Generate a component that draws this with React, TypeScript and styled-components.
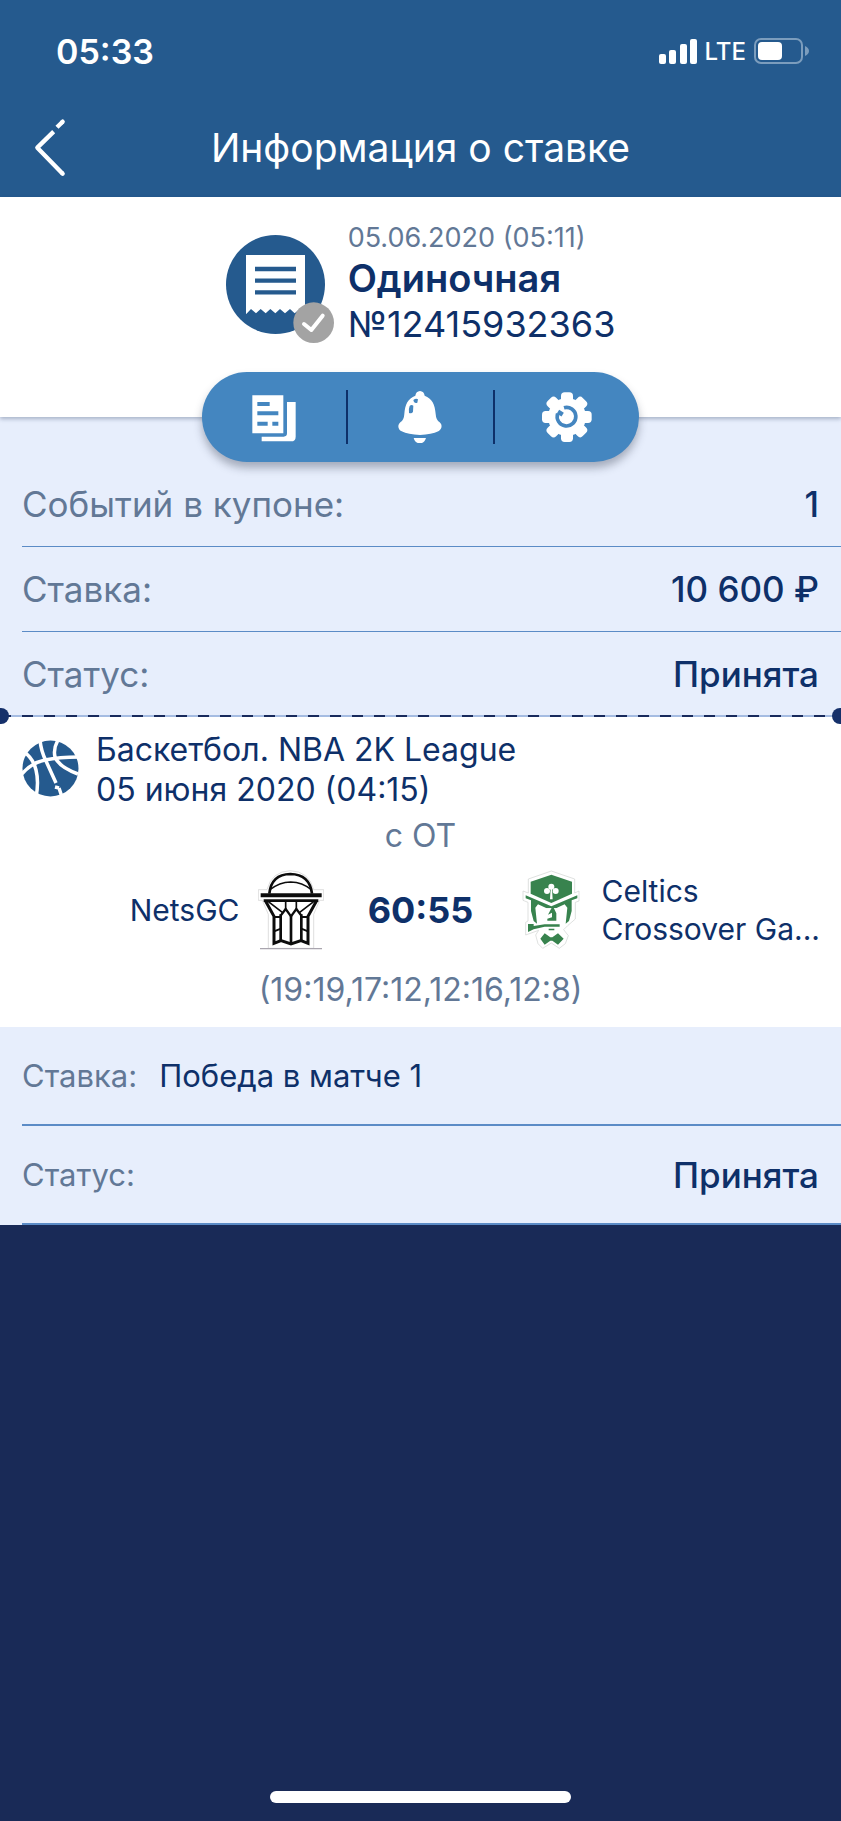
import React from "react";
import styled, { createGlobalStyle } from "styled-components";

const color = {
  header: "#255a8e",
  pill: "#4486c0",
  navy: "#0e3069",
  slate: "#627896",
  pale: "#e7eefc",
  line: "#5b8bc6",
  night: "#192a57",
};

const GlobalStyle = createGlobalStyle`
  * { box-sizing: border-box; }
  body {
    margin: 0;
    background: ${color.night};
    color: ${color.navy};
    font-family: Inter, "Liberation Sans", sans-serif;
    -webkit-font-smoothing: antialiased;
  }
  button { font: inherit; border: 0; padding: 0; background: none; cursor: pointer; }
  h1, h2, p, dl, dt, dd { margin: 0; font-weight: 400; }
  svg { display: block; flex: none; }
`;

const Screen = styled.div`
  display: flex;
  flex-direction: column;
  min-height: 100vh;
`;

const TopBar = styled.header`
  background: ${color.header};
  color: #fff;
`;

const StatusBar = styled.div`
  display: flex;
  justify-content: space-between;
  align-items: center;
  height: 98px;
  padding: 4px 32px 0 56px;
`;

const Clock = styled.time`
  font-size: 34px;
  font-weight: 600;
`;

const Indicators = styled.div`
  display: flex;
  align-items: center;
  gap: 8px;
  font-size: 24px;
  font-weight: 500;
`;

const NavBar = styled.nav`
  display: grid;
  grid-template-columns: 68px 1fr 68px;
  align-items: center;
  height: 99px;
  padding: 0 16px;
`;

const BackButton = styled.button`
  display: flex;
  justify-content: center;
`;

const Title = styled.h1`
  font-size: 39px;
  line-height: 48px;
  text-align: center;
  white-space: nowrap;
`;

const Ticket = styled.section`
  position: relative;
  z-index: 1;
  display: flex;
  justify-content: center;
  gap: 14px;
  padding: 24px 22px 71px;
  background: #fff;
  box-shadow: 0 2px 4px rgba(20, 40, 80, 0.3);
`;

const TicketIcon = styled.div`
  padding-top: 14px;
`;

const TicketDate = styled.p`
  font-size: 27px;
  line-height: 34px;
  color: ${color.slate};
`;

const TicketType = styled.h2`
  font-size: 38px;
  font-weight: 600;
  line-height: 47px;
`;

const TicketNumber = styled.p`
  font-size: 36px;
  line-height: 44px;
`;

const Actions = styled.div`
  position: absolute;
  right: 0;
  bottom: -45px;
  left: 0;
  display: flex;
  align-items: center;
  width: 437px;
  height: 90px;
  margin: 0 auto;
  border-radius: 45px;
  background: ${color.pill};
  box-shadow: 0 6px 8px rgba(40, 50, 70, 0.35);
`;

const Action = styled.button`
  display: flex;
  flex: 1;
  justify-content: center;
  align-items: center;
  height: 54px;

  & + & { border-left: 2px solid ${color.navy}; }
`;

const Summary = styled.dl`
  padding-top: 45px;
  background: ${color.pale};
`;

const Details = styled.dl`
  background: ${color.pale};
`;

const Row = styled.div`
  display: flex;
  align-items: center;
  gap: 24px;
  height: 85px;
  margin-left: 22px;
  padding-right: 22px;
  border-bottom: 1px solid ${color.line};

  &:last-child {
    height: 83px;
    border-bottom: 0;
  }
`;

const DetailRow = styled.div`
  display: flex;
  align-items: center;
  gap: 22px;
  height: 99px;
  margin-left: 22px;
  padding-right: 22px;
  border-bottom: 2px solid ${color.line};
`;

const Label = styled.dt<{ $small?: boolean }>`
  font-size: ${(p) => (p.$small ? 31 : 35)}px;
  color: ${color.slate};
`;

const Value = styled.dd<{ $plain?: boolean }>`
  margin-left: ${(p) => (p.$plain ? "0" : "auto")};
  font-size: ${(p) => (p.$plain ? 31 : 35)}px;
  font-weight: ${(p) => (p.$plain ? 400 : 500)};
`;

const Perforation = styled.div`
  position: relative;
  height: 2px;
  background: repeating-linear-gradient(90deg, #182a5c 0 11px, #a5bce2 11px 22px);

  &::before, &::after {
    content: "";
    position: absolute;
    top: -7px;
    width: 16px;
    height: 16px;
    border-radius: 50%;
    background: #15306a;
  }
  &::before { left: -7px; }
  &::after { right: -7px; }
`;

const Clip = styled.div`
  overflow-x: clip;
`;

const Event = styled.section`
  padding: 13px 22px 17px;
  background: #fff;
`;

const League = styled.div`
  display: flex;
  align-items: flex-start;
  gap: 17px;
  padding-bottom: 6px;
  font-size: 32px;
  line-height: 40px;
`;

const BallBox = styled.div`
  padding-top: 10px;
`;

const Note = styled.p`
  font-size: 32px;
  line-height: 40px;
  text-align: center;
  color: ${color.slate};
`;

const Match = styled.div`
  display: grid;
  grid-template-columns: 1fr 104px 1fr;
  gap: 45px;
  align-items: center;
  padding: 14px 0 20px;
`;

const Team = styled.div<{ $home?: boolean }>`
  display: flex;
  flex-direction: ${(p) => (p.$home ? "row" : "row-reverse")};
  justify-content: flex-end;
  align-items: center;
  gap: 18px;
  min-width: 0;
  font-size: 30px;
  line-height: 38px;
  white-space: nowrap;
`;

const Score = styled.strong`
  display: flex;
  justify-content: center;
  font-size: 36px;
  font-weight: 700;
`;

const Bottom = styled.footer`
  display: flex;
  justify-content: center;
  margin-top: auto;
  padding-bottom: 18px;
`;

const HomeIndicator = styled.div`
  width: 301px;
  height: 12px;
  border-radius: 6px;
  background: #fff;
`;

const SignalIcon = () => (
  <svg width="38" height="25" viewBox="0 0 38 25" fill="#fff">
    <rect x="0" y="15" width="7" height="10" rx="2" />
    <rect x="10" y="11" width="7" height="14" rx="2" />
    <rect x="21" y="5" width="7" height="20" rx="2" />
    <rect x="31" y="0" width="7" height="25" rx="2" />
  </svg>
);

const BatteryIcon = () => (
  <svg width="55" height="26" viewBox="0 0 55 26">
    <rect x="1" y="1" width="47" height="24" rx="6" fill="none" stroke="#7c9dbd" strokeWidth="2" />
    <rect x="4" y="4" width="24" height="18" rx="4" fill="#fff" />
    <path d="M51 8q4 2 4 5t-4 5z" fill="#7c9dbd" />
  </svg>
);

const BackIcon = () => (
  <svg width="34" height="60" viewBox="101 353 102 180" fill="none" stroke="#fff" strokeWidth="13">
    <path d="M190 364 188 366" strokeLinecap="round" />
    <path d="M190 364 173 381M163 394 114 442 190 520" strokeLinejoin="round" />
    <path d="M189 519 190 520" strokeLinecap="round" />
  </svg>
);

const ReceiptIcon = () => (
  <svg width="108" height="108" viewBox="81 105 324 324">
    <circle cx="229.500" cy="253.500" r="148.500" fill={color.header} />
    <path
      fill="#fff"
      d="M141 165H318V343L302 327 287 340 273 327 258 340 243 327 229 340 214 327 200 340 185 327 171 340 156 327 141 343Z"
    />
    <path d="M168 207H291M168 242H291M168 277H291" stroke={color.header} strokeWidth="13" />
    <circle cx="344" cy="368" r="61" fill="#a3a3a3" />
    <path d="M315 372 337 390 371 347" fill="none" stroke="#fff" strokeWidth="12" strokeLinecap="round" strokeLinejoin="round" />
  </svg>
);

const CouponsIcon = () => (
  <svg width="52" height="52" viewBox="139 572 156 156">
    <path fill="#fff" d="M152 585H245V699H152ZM256 605H282V709Q282 723 268 723H180V709H246Q256 709 256 699Z" />
    <path d="M167 611H204M167 639H230M167 670H198M212 670H230" stroke={color.pill} strokeWidth="12" />
  </svg>
);

const BellIcon = () => (
  <svg width="52" height="52" viewBox="580 572 156 156">
    <path
      fill="#fff"
      d="M658 572Q670 573 672 586C694 594 703 612 705 641Q706 659 717 666C726 674 724 686 713 693Q693 703 658 704 622 703 603 693C591 686 590 674 599 666Q610 659 611 641C613 612 622 594 644 586Q646 573 658 572ZM639 713H676Q671 729 658 729 643 729 639 713Z"
    />
    <path fill={color.pill} d="M638 599Q646 593 652 597L650 607Q644 609 640 605ZM627 617Q632 612 638 616L637 634Q634 641 625 638 623 626 627 617Z" />
  </svg>
);

const GearIcon = () => (
  <svg width="52" height="52" viewBox="1017 572 156 156">
    <g fill="#fff">
      <circle cx="1095" cy="650" r="57" />
      {[0, 45, 90, 135].map((angle) => (
        <rect key={angle} x="1077" y="576" width="36" height="149" rx="11" transform={`rotate(${angle} 1095 650)`} />
      ))}
    </g>
    <path d="M1086 622A28 28 0 1 1 1067 640" fill="none" stroke={color.pill} strokeWidth="11" />
    <path d="M1068 634 1082 643" stroke={color.pill} strokeWidth="13" />
  </svg>
);

const BasketballIcon = () => (
  <svg width="57" height="57" viewBox="0 0 57 57">
    <circle cx="28.500" cy="28.500" r="28" fill={color.header} />
    <g fill="none" stroke="#fff" strokeWidth="3.500">
      <path d="M18 0Q19 11 24 21L34 43M37 48 40 57M33 47 37 48" />
      <path d="M2 12Q11 18 14 30T14 57" />
      <path d="M0 34Q9 23 23 20T57 17" />
      <path d="M36 0Q31 9 33 17 37 27 56 34" />
    </g>
  </svg>
);

const NetsLogo = () => (
  <svg width="66" height="80" viewBox="21 27 198 240">
    <path d="M48 86Q62 31 118 29 174 31 188 86H218V118H206L188 160V262H52V160L34 118H22V86Z" fill="#fff" stroke="#cfcfcf" strokeWidth="2" />
    <path d="M27 263H213" stroke="#a9a5ae" strokeWidth="4" />
    <g fill="none" stroke="#0c0c0c">
      <path d="M55 98Q61 40 118 39 176 40 183 98" strokeWidth="8" />
      <path d="M57 86Q85 64 119 63 154 64 181 86" strokeWidth="4" />
      <path d="M29 103H212" strokeWidth="12" />
      <path d="M38 119H202" strokeWidth="8" />
      <path d="M44 121 69 166V247L90 239 120 249 150 239 171 247V166L196 121" strokeWidth="9" />
      <path d="M89 238V160M151 238V160M120 246V162" strokeWidth="8" />
      <path d="M89 164 104 144 120 166 136 144 151 164" strokeWidth="7" />
      <path d="M104 121V144M136 121V144" strokeWidth="5" />
      <path d="M52 122 94 154M188 122 146 154" strokeWidth="5" />
      <path d="M69 168H90M151 168H171M69 211 90 203M151 203 171 211" strokeWidth="6" />
    </g>
  </svg>
);

const CelticsLogo = () => (
  <svg width="66" height="80" viewBox="6 27 198 240">
    <path
      fill="#fff"
      stroke="#cfd2d0"
      strokeWidth="2"
      d="M106 30 176 54V96L189 90V120L178 124V174L155 194 143 206 157 224 148 248 130 262 106 246 80 262 66 248 59 222 68 208 29 222V184L36 180V124L21 118V90L37 96V54Z"
    />
    <g fill="#38834e">
      <path d="M106 41 168 62V98L106 126 44 98V62Z" />
      <path d="M29 103 106 136 184 103V112L167 118V150L159 180 149 188 154 140 146 130 120 142H92L66 130 58 140 63 188 53 180 45 150V118L29 112Z" />
    </g>
    <path fill="#fff" d="M66 138 92 142H120L146 138 142 165 134 188H78L70 165Z" />
    <g fill="#38834e">
      <path d="M107 140H113L121 157V179H94V173L108 169V155L96 161Z" />
      <path d="M36 189H53V195L86 190H131V197H86L53 205 36 213ZM98 203H115V208H98Z" />
      <path d="M73 233 86 217 103 229H109L126 217 143 233 126 251 109 239H103L86 251Z" />
    </g>
    <g fill="#fff">
      <circle cx="106" cy="77" r="9" />
      <circle cx="93" cy="90" r="9" />
      <circle cx="119" cy="90" r="9" />
      <path d="M104 84H108L110 115H102Z" />
    </g>
  </svg>
);

export default function App() {
  return (
    <Screen>
      <GlobalStyle />
      <TopBar>
        <StatusBar>
          <Clock>05:33</Clock>
          <Indicators>
            <SignalIcon />
            <span>LTE</span>
            <BatteryIcon />
          </Indicators>
        </StatusBar>
        <NavBar>
          <BackButton aria-label="Назад">
            <BackIcon />
          </BackButton>
          <Title>Информация о ставке</Title>
        </NavBar>
      </TopBar>

      <main>
        <Ticket>
          <TicketIcon>
            <ReceiptIcon />
          </TicketIcon>
          <div>
            <TicketDate>05.06.2020 (05:11)</TicketDate>
            <TicketType>Одиночная</TicketType>
            <TicketNumber>№12415932363</TicketNumber>
          </div>
          <Actions>
            <Action aria-label="Купоны">
              <CouponsIcon />
            </Action>
            <Action aria-label="Уведомления">
              <BellIcon />
            </Action>
            <Action aria-label="Настройки">
              <GearIcon />
            </Action>
          </Actions>
        </Ticket>

        <Summary>
          <Row>
            <Label>Событий в купоне:</Label>
            <Value>1</Value>
          </Row>
          <Row>
            <Label>Ставка:</Label>
            <Value>10 600 ₽</Value>
          </Row>
          <Row>
            <Label>Статус:</Label>
            <Value>Принята</Value>
          </Row>
        </Summary>

        <Clip>
          <Perforation />
        </Clip>

        <Event>
          <League>
            <BallBox>
              <BasketballIcon />
            </BallBox>
            <div>
              <p>Баскетбол. NBA 2K League</p>
              <p>05 июня 2020 (04:15)</p>
            </div>
          </League>
          <Note>с ОТ</Note>
          <Match>
            <Team $home>
              <span>NetsGC</span>
              <NetsLogo />
            </Team>
            <Score>60:55</Score>
            <Team>
              <span>
                Celtics
                <br />
                Crossover Ga...
              </span>
              <CelticsLogo />
            </Team>
          </Match>
          <Note>(19:19,17:12,12:16,12:8)</Note>
        </Event>

        <Details>
          <DetailRow>
            <Label $small>Ставка:</Label>
            <Value $plain>Победа в матче 1</Value>
          </DetailRow>
          <DetailRow>
            <Label $small>Статус:</Label>
            <Value>Принята</Value>
          </DetailRow>
        </Details>
      </main>

      <Bottom>
        <HomeIndicator />
      </Bottom>
    </Screen>
  );
}
